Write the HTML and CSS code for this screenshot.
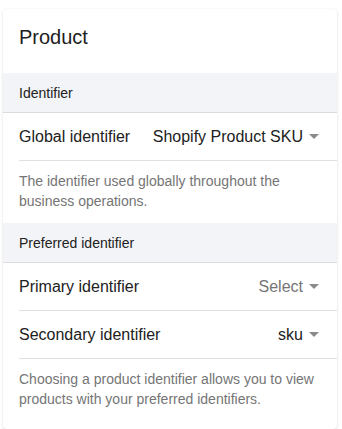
FILE: index.html
```html
<!DOCTYPE html>
<html>
<head>
<meta charset="utf-8">
<link rel="stylesheet" href="styles.css">
</head>
<body>
<div class="card">
  <div class="card-title">Product</div>
  <div class="section-head">Identifier</div>
  <div class="row">
    <span class="label">Global identifier</span>
    <span class="select"><span class="value">Shopify Product SKU</span><svg class="caret" width="10" height="5" viewBox="0 0 10 5"><path d="M0 0h10L5 5z"/></svg></span>
  </div>
  <div class="help">The identifier used globally throughout the business operations.</div>
  <div class="section-head">Preferred identifier</div>
  <div class="row">
    <span class="label">Primary identifier</span>
    <span class="select"><span class="value placeholder">Select</span><svg class="caret" width="10" height="5" viewBox="0 0 10 5"><path d="M0 0h10L5 5z"/></svg></span>
  </div>
  <div class="row">
    <span class="label">Secondary identifier</span>
    <span class="select"><span class="value">sku</span><svg class="caret" width="10" height="5" viewBox="0 0 10 5"><path d="M0 0h10L5 5z"/></svg></span>
  </div>
  <div class="help">Choosing a product identifier allows you to view products with your preferred identifiers.</div>
</div>
</body>
</html>
```
FILE: styles.css
```css
html, body {
  margin: 0;
  background: #ffffff;
}
body {
  padding: 9px 5px 0 3px;
  font-family: "Liberation Sans", Arial, sans-serif;
  color: #212121;
}
.card {
  background: #fff;
  border-radius: 4px;
  box-shadow: 0 1px 3px rgba(0,0,0,0.12), 0 0 1px rgba(0,0,0,0.08);
  padding-bottom: 8px;
}
.card-title {
  height: 64px;
  box-sizing: border-box;
  padding: 16px 16px 0;
  font-size: 20px;
  line-height: 24px;
  color: #212121;
}
.section-head {
  background: #f3f4f7;
  border-bottom: 1px solid #dcdcdc;
  height: 40px;
  box-sizing: border-box;
  padding: 1px 16px 0;
  display: flex;
  align-items: center;
  font-size: 14px;
  color: #212121;
}
.row {
  margin-left: 16px;
  padding-right: 18px;
  height: 48px;
  box-sizing: border-box;
  border-bottom: 1px solid #e0e0e0;
  display: flex;
  align-items: center;
  justify-content: space-between;
  font-size: 16px;
}
.select {
  display: flex;
  align-items: center;
  gap: 6px;
}
.value { color: #212121; }
.value.placeholder { color: #757575; }
.caret { fill: #8a8a8a; }
.help {
  padding: 10px 16px 12px;
  font-size: 14px;
  line-height: 20px;
  color: #757575;
}
```
